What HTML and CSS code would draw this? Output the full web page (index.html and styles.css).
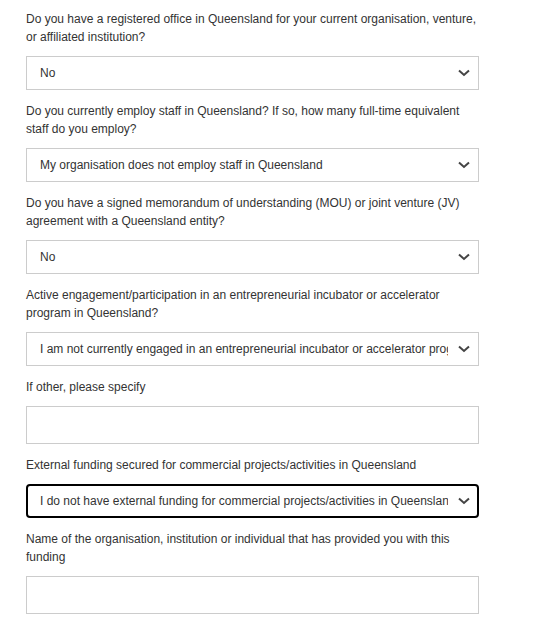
FILE: index.html
```html
<!DOCTYPE html>
<html>
<head>
<meta charset="utf-8">
<link rel="stylesheet" href="styles.css">
</head>
<body>
<form class="form">
  <div class="field">
    <label class="label">Do you have a registered office in Queensland for your current organisation, venture, or affiliated institution?</label>
    <div class="select"><span class="value">No</span><svg class="chev" viewBox="0 0 12 8" width="12" height="8"><path d="M1 1.5 L6 6 L11 1.5" fill="none" stroke="#444" stroke-width="2"/></svg></div>
  </div>
  <div class="field">
    <label class="label">Do you currently employ staff in Queensland? If so, how many full-time equivalent staff do you employ?</label>
    <div class="select"><span class="value">My organisation does not employ staff in Queensland</span><svg class="chev" viewBox="0 0 12 8" width="12" height="8"><path d="M1 1.5 L6 6 L11 1.5" fill="none" stroke="#444" stroke-width="2"/></svg></div>
  </div>
  <div class="field">
    <label class="label">Do you have a signed memorandum of understanding (MOU) or joint venture (JV) agreement with a Queensland entity?</label>
    <div class="select"><span class="value">No</span><svg class="chev" viewBox="0 0 12 8" width="12" height="8"><path d="M1 1.5 L6 6 L11 1.5" fill="none" stroke="#444" stroke-width="2"/></svg></div>
  </div>
  <div class="field">
    <label class="label">Active engagement/participation in an entrepreneurial incubator or accelerator program in Queensland?</label>
    <div class="select"><span class="value">I am not currently engaged in an entrepreneurial incubator or accelerator program</span><svg class="chev" viewBox="0 0 12 8" width="12" height="8"><path d="M1 1.5 L6 6 L11 1.5" fill="none" stroke="#444" stroke-width="2"/></svg></div>
  </div>
  <div class="field">
    <label class="label">If other, please specify</label>
    <div class="input"></div>
  </div>
  <div class="field">
    <label class="label">External funding secured for commercial projects/activities in Queensland</label>
    <div class="select focused"><span class="value">I do not have external funding for commercial projects/activities in Queensland</span><svg class="chev" viewBox="0 0 12 8" width="12" height="8"><path d="M1 1.5 L6 6 L11 1.5" fill="none" stroke="#444" stroke-width="2"/></svg></div>
  </div>
  <div class="field">
    <label class="label">Name of the organisation, institution or individual that has provided you with this funding</label>
    <div class="input"></div>
  </div>
</form>
</body>
</html>
```
FILE: styles.css
```css
html, body {
  margin: 0;
  padding: 0;
  background: #fff;
}
body {
  font-family: "Liberation Sans", Arial, sans-serif;
  font-size: 12px;
  color: #333;
}
.form {
  width: 453px;
  padding: 10px 0 0 26px;
  display: flex;
  flex-direction: column;
  gap: 12px;
}
.field {
  display: flex;
  flex-direction: column;
  gap: 10px;
}
.label {
  display: block;
  line-height: 18px;
  color: #333;
}
.select {
  box-sizing: border-box;
  height: 34px;
  border: 1px solid #ccc;
  display: flex;
  align-items: center;
  padding: 0 8px 0 13px;
  gap: 10px;
  color: #333;
  background: #fff;
}
.select .value {
  flex: 1;
  white-space: nowrap;
  overflow: hidden;
  line-height: 16px;
}
.select .chev {
  flex: none;
}
.select.focused {
  border: 2px solid #000;
  border-radius: 4px;
  padding: 0 7px 0 12px;
}
.input {
  box-sizing: border-box;
  height: 38px;
  border: 1px solid #ccc;
  background: #fff;
}
```
